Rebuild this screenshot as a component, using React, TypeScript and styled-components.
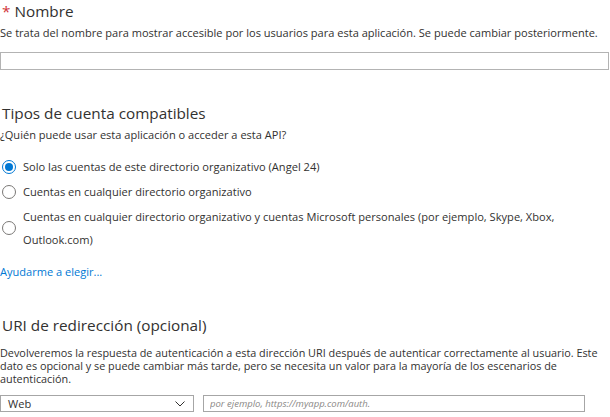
import React from "react";
import styled, { createGlobalStyle } from "styled-components";

const GlobalStyle = createGlobalStyle`
  body {
    margin: 0;
    background: #ffffff;
    font-family: "Open Sans", "Noto Sans", sans-serif;
    color: #323130;
  }
`;

const accountTypes = [
  { label: "Solo las cuentas de este directorio organizativo (Angel 24)", checked: true },
  { label: "Cuentas en cualquier directorio organizativo", checked: false },
  {
    label:
      "Cuentas en cualquier directorio organizativo y cuentas Microsoft personales (por ejemplo, Skype, Xbox, Outlook.com)",
    checked: false,
  },
];

export default function App() {
  return (
    <>
      <GlobalStyle />
      <Page>
        <Section>
          <Title>
            <Required>*</Required> Nombre
          </Title>
          <Description>
            Se trata del nombre para mostrar accesible por los usuarios para esta aplicación. Se puede
            cambiar posteriormente.
          </Description>
          <TextInput />
        </Section>

        <Section>
          <Title>Tipos de cuenta compatibles</Title>
          <Description>¿Quién puede usar esta aplicación o acceder a esta API?</Description>
          <RadioList>
            {accountTypes.map((t) => (
              <RadioRow key={t.label}>
                <Radio checked={t.checked} />
                <RadioLabel>{t.label}</RadioLabel>
              </RadioRow>
            ))}
          </RadioList>
          <Link>Ayudarme a elegir...</Link>
        </Section>

        <Section>
          <Title>URI de redirección (opcional)</Title>
          <Paragraph>
            Devolveremos la respuesta de autenticación a esta dirección URI después de autenticar
            correctamente al usuario. Este dato es opcional y se puede cambiar más tarde, pero se
            necesita un valor para la mayoría de los escenarios de autenticación.
          </Paragraph>
          <UriRow>
            <Select>
              <span>Web</span>
              <svg width="10" height="6" viewBox="0 0 10 6">
                <path d="M0.5 0.5 L5 5 L9.5 0.5" fill="none" stroke="#323130" strokeWidth="1" />
              </svg>
            </Select>
            <UriInput placeholder="por ejemplo, https://myapp.com/auth." />
          </UriRow>
        </Section>
      </Page>
    </>
  );
}

const Page = styled.div`
  width: 610px;
  height: 417px;
  overflow: hidden;
  display: flex;
  flex-direction: column;
  gap: 32px;
`;

const Section = styled.div`
  display: flex;
  flex-direction: column;
`;

const Title = styled.div`
  font-size: 15.3px;
  line-height: 22px;
  color: #323130;
  padding-left: 2px;
`;

const Required = styled.span`
  color: #d13438;
`;

const Description = styled.div`
  font-size: 11.05px;
  line-height: 14px;
  margin-top: 4px;
  color: #323130;
  white-space: nowrap;
`;

const TextInput = styled.div`
  box-sizing: border-box;
  height: 18px;
  width: 609px;
  margin-top: 12px;
  border: 1px solid #b3b3b3;
  background: #fff;
`;

const RadioList = styled.div`
  display: flex;
  flex-direction: column;
  gap: 2px;
  margin-top: 13px;
`;

const RadioRow = styled.div`
  display: flex;
  align-items: center;
  gap: 7px;
  padding-left: 2px;
`;

const Radio = styled.span<{ checked: boolean }>`
  box-sizing: border-box;
  flex: none;
  width: 14px;
  height: 14px;
  border-radius: 50%;
  border: 1px solid ${(p) => (p.checked ? "#0078d4" : "#7a7876")};
  position: relative;

  &::after {
    content: "";
    display: ${(p) => (p.checked ? "block" : "none")};
    position: absolute;
    left: 2px;
    top: 2px;
    width: 8px;
    height: 8px;
    border-radius: 50%;
    background: #0078d4;
  }
`;

const RadioLabel = styled.span`
  font-size: 11.1px;
  line-height: 23px;
  color: #323130;
  max-width: 545px;
`;

const Link = styled.a`
  font-size: 11.05px;
  line-height: 14px;
  margin-top: 14px;
  margin-bottom: 3px;
  color: #0078d4;
  cursor: pointer;
`;

const Paragraph = styled.div`
  font-size: 10.85px;
  line-height: 13px;
  margin-top: 10px;
  color: #323130;
`;

const UriRow = styled.div`
  display: flex;
  gap: 9px;
  margin-top: 10px;
`;

const Select = styled.div`
  box-sizing: border-box;
  width: 194px;
  height: 17px;
  border: 1px solid #a6a6a6;
  display: flex;
  align-items: center;
  justify-content: space-between;
  padding: 0 8px 0 7px;
  font-size: 11.05px;
  color: #323130;
`;

const UriInput = styled.input`
  box-sizing: border-box;
  width: 382px;
  height: 17px;
  border: 1px solid #a6a6a6;
  padding: 0 6px;
  font-family: inherit;
  font-size: 9.5px;
  outline: none;

  &::placeholder {
    color: #8a8886;
    font-style: italic;
  }
`;
